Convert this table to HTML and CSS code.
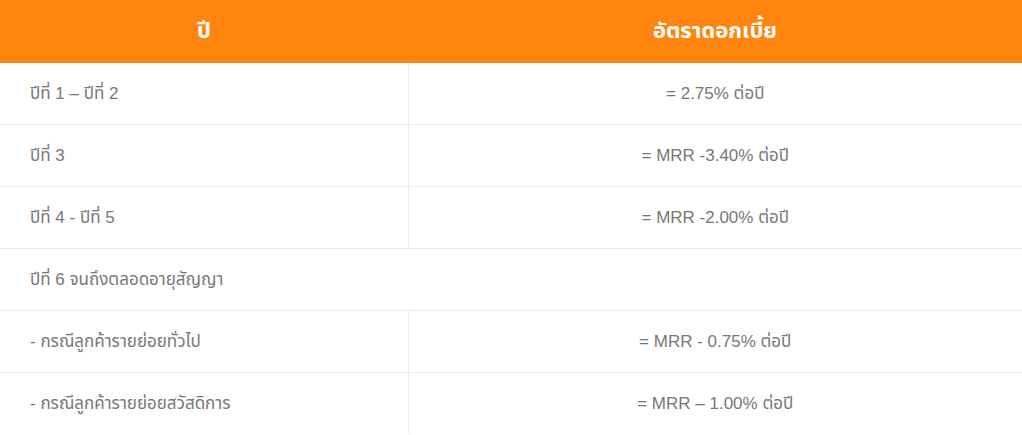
FILE: index.html
```html
<!DOCTYPE html>
<html lang="th">
<head>
<meta charset="utf-8">
<link rel="stylesheet" href="styles.css">
</head>
<body>
<table class="rates">
  <thead>
    <tr><th class="col-year">ปี</th><th class="col-rate">อัตราดอกเบี้ย</th></tr>
  </thead>
  <tbody>
    <tr><td>ปีที่ 1 – ปีที่ 2</td><td class="rate">= 2.75% ต่อปี</td></tr>
    <tr><td>ปีที่ 3</td><td class="rate">= MRR -3.40% ต่อปี</td></tr>
    <tr><td>ปีที่ 4 - ปีที่ 5</td><td class="rate">= MRR -2.00% ต่อปี</td></tr>
    <tr><td colspan="2">ปีที่ 6 จนถึงตลอดอายุสัญญา</td></tr>
    <tr><td>- กรณีลูกค้ารายย่อยทั่วไป</td><td class="rate">= MRR - 0.75% ต่อปี</td></tr>
    <tr><td>- กรณีลูกค้ารายย่อยสวัสดิการ</td><td class="rate">= MRR – 1.00% ต่อปี</td></tr>
  </tbody>
</table>
</body>
</html>
```
FILE: styles.css
```css
html, body { margin: 0; padding: 0; background: #fff; }
body { font-family: "Liberation Sans", Tahoma, "Noto Sans Thai", "Noto Sans", sans-serif; }
.rates { width: 1022px; border-collapse: collapse; table-layout: fixed; }
.rates th {
  background: #ff850e;
  color: #fff;
  font-weight: bold;
  font-size: 22px;
  height: 63px;
  padding: 0;
  text-align: center;
  vertical-align: middle;
}
.col-year { width: 408px; }
.rates td {
  height: 61px;
  padding: 0 0 0 30px;
  color: #777;
  font-size: 17px;
  border-bottom: 1px solid #ebebeb;
  vertical-align: middle;
}
.rates td + td { border-left: 1px solid #ebebeb; }
.rates td.rate { text-align: center; padding: 0; }
.rates tr:last-child td { border-bottom: 0; }
```
